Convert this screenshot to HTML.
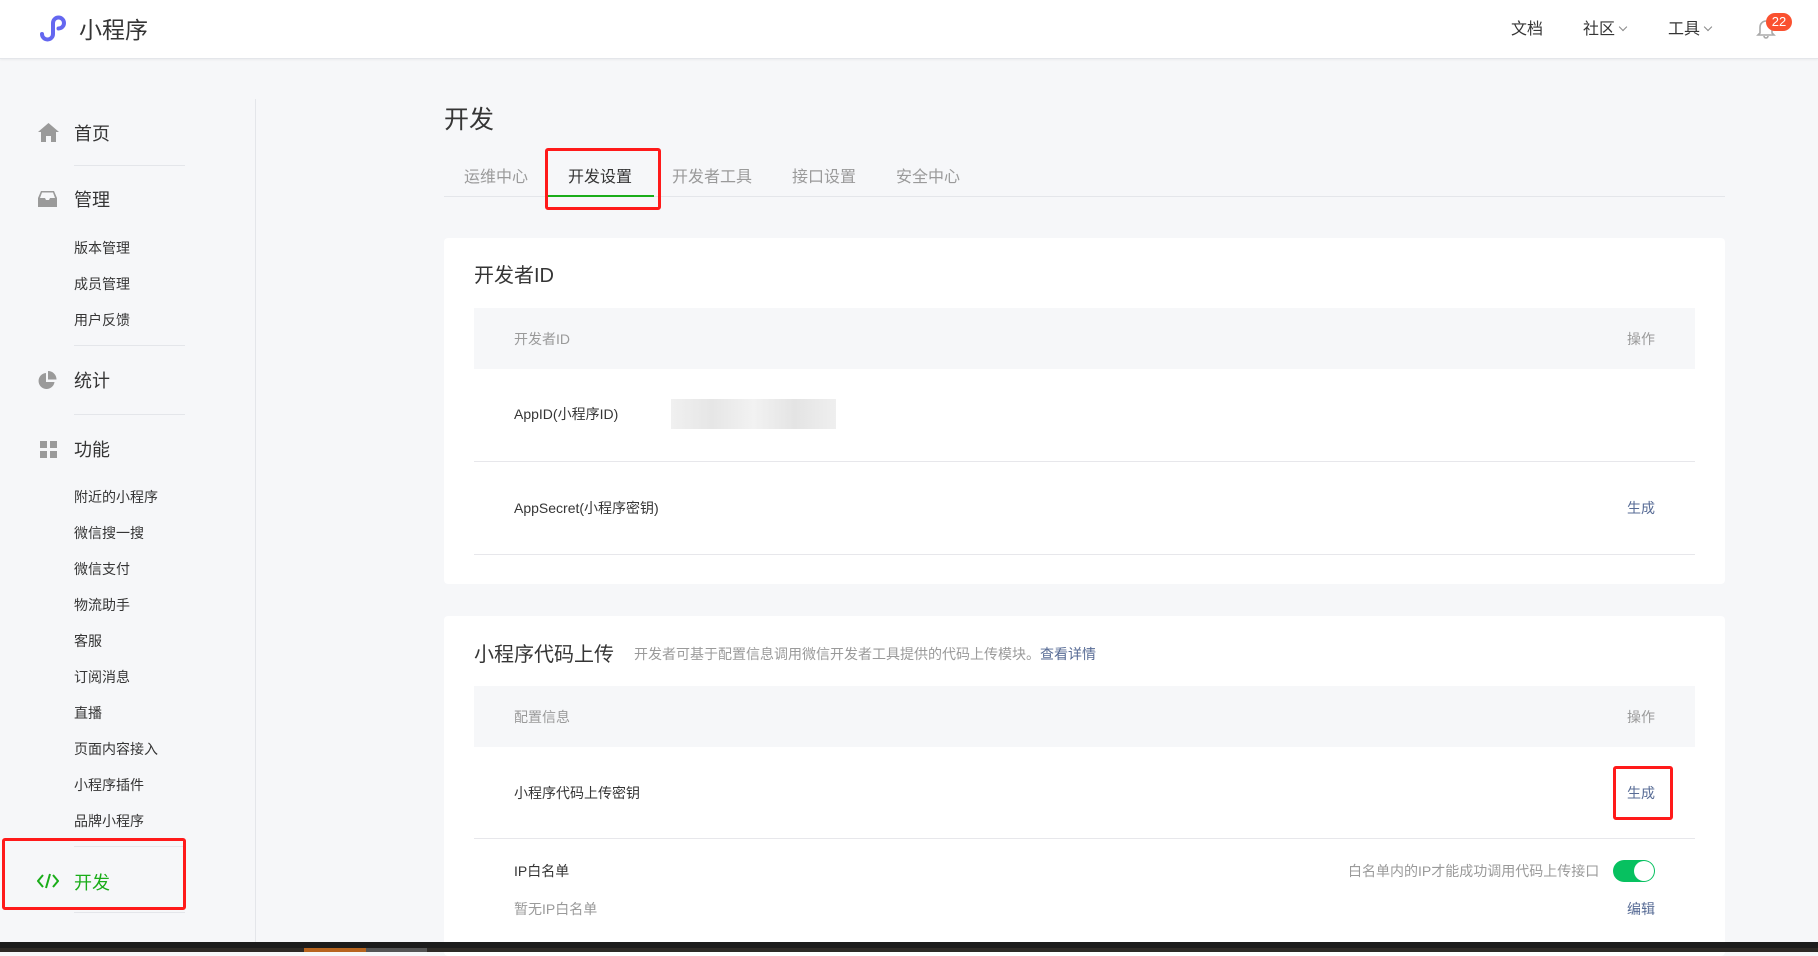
<!DOCTYPE html>
<html><head><meta charset="utf-8"><style>
*{margin:0;padding:0;box-sizing:border-box}
body{width:1818px;height:952px;overflow:hidden;background:#f6f7f9;font-family:"Liberation Sans","Noto Sans CJK SC",sans-serif;color:#353535;position:relative}
.a{position:absolute;white-space:nowrap}
.hdr{position:absolute;left:0;top:0;width:1818px;height:59px;background:#fff;border-bottom:1px solid #e4e6ea;box-shadow:0 1px 2px rgba(0,0,0,.05)}
.nav{font-size:16px;color:#353535;top:15px}
.chev{display:inline-block;width:6px;height:6px;border-right:1.3px solid #888;border-bottom:1.3px solid #888;transform:rotate(45deg);margin-left:5px;position:relative;top:-4px}
.mi{font-size:18px;color:#353535;transform:translateY(-50%)}
.si{font-size:14px;color:#353535;transform:translateY(-50%)}
.dv{position:absolute;left:74px;width:111px;height:1px;background:#e4e6ea}
.card{position:absolute;left:444px;width:1281px;background:#fff;border-radius:4px}
.th{position:absolute;left:474px;width:1221px;background:#f6f7f9}
.t14{font-size:14px;transform:translateY(-50%)}
.gray{color:#9a9a9a}
.link{color:#576b95}
.hl{position:absolute;left:474px;width:1221px;height:1px;background:#e7e7eb}
.red{position:absolute;border:3px solid #ff1a1a;border-radius:3px}
</style></head><body>
<div class="hdr"></div>
<svg class="a" style="left:38px;top:13px" width="32" height="30" viewBox="0 0 32 30"><path d="M4 21a5.5 5.5 0 1 0 11 0V10a5.5 5.5 0 1 1 5.5 5.5" fill="none" stroke="#6467f0" stroke-width="4" stroke-linecap="round"/></svg>
<div class="a" style="left:79px;top:11px;font-size:23px;color:#353535">小程序</div>
<div class="a nav" style="left:1511px">文档</div>
<div class="a nav" style="left:1583px">社区<span class="chev"></span></div>
<div class="a nav" style="left:1668px">工具<span class="chev"></span></div>
<svg class="a" style="left:1756px;top:17px" width="20" height="22" viewBox="0 0 20 22"><path d="M4 16V10a6 6 0 0 1 12 0v6l2 2H2z" fill="none" stroke="#aaa" stroke-width="1.6"/><path d="M8 19a2 2 0 0 0 4 0" fill="none" stroke="#aaa" stroke-width="1.6"/></svg>
<div class="a" style="left:1766px;top:13px;width:26px;height:18px;border-radius:9px;background:#fa5130;color:#fff;font-size:13px;text-align:center;line-height:18px">22</div>

<div class="a" style="left:255px;top:99px;width:1px;height:843px;background:#e4e6ea"></div>
<svg class="a" style="left:38px;top:123px" width="21" height="19" viewBox="0 0 21 19"><path d="M10.5 0L0 9h3v10h5v-6h5v6h5V9h3z" fill="#9a9a9a"/></svg>
<div class="a mi" style="left:74px;top:133px">首页</div>
<div class="dv" style="top:165px"></div>
<svg class="a" style="left:38px;top:191px" width="19" height="16" viewBox="0 0 19 16"><path d="M3 0h13l3 7v9H0V7zM2 7h5l1 2h3l1-2h5L15 1.5H4z" fill="#9a9a9a"/></svg>
<div class="a mi" style="left:74px;top:199px">管理</div>
<div class="a si" style="left:74px;top:248px">版本管理</div>
<div class="a si" style="left:74px;top:284px">成员管理</div>
<div class="a si" style="left:74px;top:320px">用户反馈</div>
<div class="dv" style="top:345px"></div>
<svg class="a" style="left:38px;top:371px" width="19" height="19" viewBox="0 0 19 19"><path d="M8 2a8 8 0 1 0 8.5 9H8z" fill="#9a9a9a"/><path d="M10 0v8.5h8.5A8.5 8.5 0 0 0 10 0z" fill="#9a9a9a"/></svg>
<div class="a mi" style="left:74px;top:380px">统计</div>
<div class="dv" style="top:414px"></div>
<svg class="a" style="left:40px;top:441px" width="17" height="17" viewBox="0 0 17 17"><rect width="7" height="7" fill="#9a9a9a"/><rect x="10" width="7" height="7" fill="#9a9a9a"/><rect y="10" width="7" height="7" fill="#9a9a9a"/><rect x="10" y="10" width="7" height="7" fill="#9a9a9a"/></svg>
<div class="a mi" style="left:74px;top:449px">功能</div>
<div class="a si" style="left:74px;top:497px">附近的小程序</div>
<div class="a si" style="left:74px;top:533px">微信搜一搜</div>
<div class="a si" style="left:74px;top:569px">微信支付</div>
<div class="a si" style="left:74px;top:605px">物流助手</div>
<div class="a si" style="left:74px;top:641px">客服</div>
<div class="a si" style="left:74px;top:677px">订阅消息</div>
<div class="a si" style="left:74px;top:713px">直播</div>
<div class="a si" style="left:74px;top:749px">页面内容接入</div>
<div class="a si" style="left:74px;top:785px">小程序插件</div>
<div class="a si" style="left:74px;top:821px">品牌小程序</div>
<div class="dv" style="top:846px"></div>
<svg class="a" style="left:37px;top:873px" width="22" height="16" viewBox="0 0 22 16"><path d="M6 2L1 8l5 6M16 2l5 6-5 6M13 1L9 15" fill="none" stroke="#1aad19" stroke-width="2"/></svg>
<div class="a mi" style="left:74px;top:882px;color:#1aad19">开发</div>
<div class="dv" style="top:912px"></div>
<div class="red" style="left:2px;top:838px;width:184px;height:72px"></div>

<div class="a" style="left:444px;top:100px;font-size:25px;color:#353535">开发</div>
<div class="a" style="left:444px;top:196px;width:1281px;height:1px;background:#e4e6ea"></div>
<div class="a t14 gray" style="left:464px;top:175px;font-size:16px">运维中心</div>
<div class="a t14" style="left:568px;top:175px;font-size:16px">开发设置</div>
<div class="a t14 gray" style="left:672px;top:175px;font-size:16px">开发者工具</div>
<div class="a t14 gray" style="left:792px;top:175px;font-size:16px">接口设置</div>
<div class="a t14 gray" style="left:896px;top:175px;font-size:16px">安全中心</div>
<div class="a" style="left:548px;top:195px;width:106px;height:2px;background:#1aad19"></div>
<div class="red" style="left:545px;top:148px;width:116px;height:62px"></div>

<div class="card" style="top:238px;height:346px"></div>
<div class="a" style="left:474px;top:259px;font-size:20px">开发者ID</div>
<div class="th" style="top:308px;height:61px"></div>
<div class="a t14 gray" style="left:514px;top:339px">开发者ID</div>
<div class="a t14 gray" style="left:1627px;top:339px">操作</div>
<div class="a t14" style="left:514px;top:414px">AppID(小程序ID)</div>
<div class="a" style="left:671px;top:399px;width:165px;height:30px;background:linear-gradient(90deg,#f0f0f0,#e6e6e6,#f2f2f2,#e4e4e4,#efefef)"></div>
<div class="hl" style="top:461px"></div>
<div class="a t14" style="left:514px;top:508px">AppSecret(小程序密钥)</div>
<div class="a t14 link" style="left:1627px;top:508px">生成</div>
<div class="hl" style="top:554px"></div>

<div class="card" style="top:616px;height:340px"></div>
<div class="a" style="left:474px;top:638px;font-size:20px">小程序代码上传</div>
<div class="a t14 gray" style="left:634px;top:654px">开发者可基于配置信息调用微信开发者工具提供的代码上传模块。<span class="link">查看详情</span></div>
<div class="th" style="top:686px;height:61px"></div>
<div class="a t14 gray" style="left:514px;top:717px">配置信息</div>
<div class="a t14 gray" style="left:1627px;top:717px">操作</div>
<div class="a t14" style="left:514px;top:793px">小程序代码上传密钥</div>
<div class="a t14 link" style="left:1627px;top:793px">生成</div>
<div class="red" style="left:1613px;top:766px;width:60px;height:54px"></div>
<div class="hl" style="top:838px"></div>
<div class="a t14" style="left:514px;top:871px">IP白名单</div>
<div class="a t14 gray" style="left:1348px;top:871px">白名单内的IP才能成功调用代码上传接口</div>
<div class="a" style="left:1613px;top:860px;width:42px;height:22px;border-radius:11px;background:#07c160"></div>
<div class="a" style="left:1634px;top:861px;width:20px;height:20px;border-radius:50%;background:#fff"></div>
<div class="a t14 gray" style="left:514px;top:909px">暂无IP白名单</div>
<div class="a t14 link" style="left:1627px;top:909px">编辑</div>

<div class="a" style="left:0;top:942px;width:1818px;height:10px;background:#1c1c1c"></div>
<div class="a" style="left:0;top:948px;width:1818px;height:4px;background:#2e2a26"></div>
<div class="a" style="left:304px;top:948px;width:62px;height:4px;background:#b8651f"></div>
<div class="a" style="left:366px;top:948px;width:61px;height:4px;background:#555"></div>
</body></html>
